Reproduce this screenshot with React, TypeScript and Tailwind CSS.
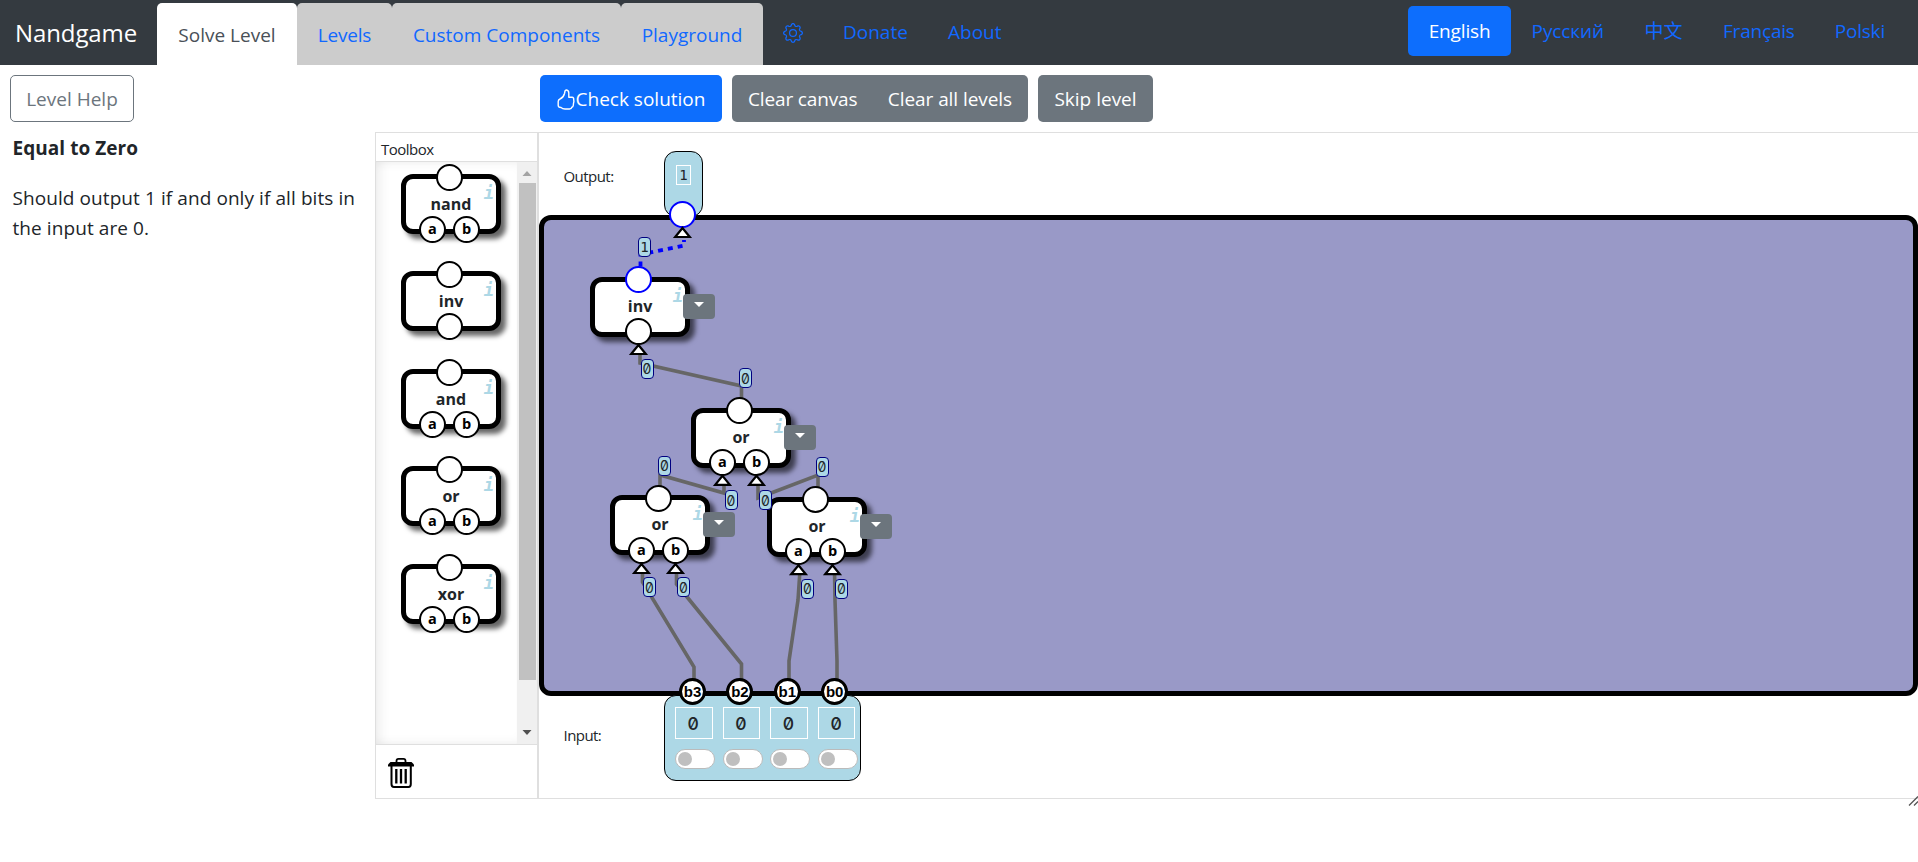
import { BsGear } from "react-icons/bs";

const STAGE_X = 539;
const STAGE_Y = 132;

type Port = { label?: string; dx: number };

const AB: Port[] = [{ label: "a", dx: 31.5 }, { label: "b", dx: 65.5 }];
const INV: Port[] = [{ dx: 48.5 }];

function Connector({ label, live, left, top }: { label?: string; live?: boolean; left: number; top: number }) {
  return (
    <div
      className={`absolute flex size-[27px] items-center justify-center rounded-full border-[2.5px] bg-white text-[14.5px] leading-none font-bold text-black ${live ? "border-[#0000ff]" : "border-black"}`}
      style={{ left: left - 13.5, top: top - 13.5 }}
    >
      {label}
    </div>
  );
}

function Gate({ name, inputs = AB, live, drop = 0, portDrop = drop }: { name: string; inputs?: Port[]; live?: boolean; drop?: number; portDrop?: number }) {
  return (
    <div className="relative h-[60px] w-[100px] shrink-0 rounded-[12px] border-[5px] border-black bg-white shadow-[5px_5px_5px_rgba(0,0,0,0.6)]">
      <div className="text-center text-[16px] leading-[22px] font-bold text-[#212529]" style={{ paddingTop: 13 + drop }}>{name}</div>
      <div className="absolute top-[4px] right-[2px] font-['DejaVu_Sans_Mono',monospace] text-[17px] leading-[21px] font-bold text-[#add8e6] italic">i</div>
      <Connector left={43.5} top={-2.5 + portDrop} live={live} />
      {inputs.map((p) => (
        <Connector key={p.dx} label={p.label} left={p.dx - 5} top={49.5 + portDrop} />
      ))}
    </div>
  );
}

function Caret() {
  return (
    <button className="absolute top-[17px] left-[93px] flex h-[25px] w-[32px] justify-center rounded-[4px] bg-[#6c757d] pt-[8px]">
      <svg width="10" height="5" viewBox="0 0 10 5"><path d="M0 0H10L5 5Z" fill="#fff" /></svg>
    </button>
  );
}

function ThumbUp() {
  return (
    <svg className="mr-px" width="18" height="21" viewBox="0 0 18 21" fill="none" stroke="#fff" strokeWidth="1.4" strokeLinejoin="round" strokeLinecap="round">
      <path d="M1.200 12.500Q1.200 10.800 3 10Q6.500 8.500 7.500 4.500L8 2Q8.300 0.900 9.600 1Q11.800 1.300 11.800 4.200V8.200H15Q17 8.400 16.700 10.500L16.900 12.300L16.500 14.300L16.300 16.300Q16 18 14.800 18.200Q14.500 20 12.500 20H8Q5.500 19.800 4 18.500Q1.200 18.300 1.200 16.500Z" />
    </svg>
  );
}

const nodes = [
  { name: "inv", x: 590, y: 277, inputs: INV, live: true, portDrop: 0 },
  { name: "or", x: 691, y: 408, inputs: AB, portDrop: 0 },
  { name: "or", x: 610, y: 495, inputs: AB, portDrop: 1 },
  { name: "or", x: 767, y: 497, inputs: AB, portDrop: 0 },
];

const wires = [
  "M640 350V363L741.5 386V400",
  "M660 488V475L724 493V483",
  "M818 490V475L758 498V483",
  "M642.5 568V582L694 667V682",
  "M676.5 568V584L741.5 664V682",
  "M800 570L798 600L789 661V682",
  "M834.5 570L835 600L837 661V682",
];

const arrows = [
  [682.5, 226.5], [638.5, 343.5], [722.5, 474.3], [756.5, 474.3],
  [641.5, 562.5], [675.5, 562.5], [798.5, 563.7], [832.5, 563.7],
];

const tags = [
  { v: "1", x: 638, y: 237 }, { v: "0", x: 640.5, y: 358.5 }, { v: "0", x: 739, y: 368 },
  { v: "0", x: 658, y: 455.5 }, { v: "0", x: 724.5, y: 490 }, { v: "0", x: 815.5, y: 456.5 },
  { v: "0", x: 759, y: 490 }, { v: "0", x: 643, y: 577 }, { v: "0", x: 677, y: 577 },
  { v: "0", x: 801, y: 578.5 }, { v: "0", x: 835, y: 578.5 },
];

const bits = ["b3", "b2", "b1", "b0"];

function Tab({ children, className }: { children: string; className: string }) {
  return <a className={`flex h-[62px] items-center justify-center rounded-t-[5px] pt-[3px] ${className}`}>{children}</a>;
}

function Toolbox() {
  return (
    <aside className="flex w-[164px] shrink-0 flex-col border border-r-2 border-[#dfdfdf]">
      <div className="h-[29px] border-b border-[#dfdfdf] pt-[5px] pl-[5px] text-[15px] leading-[22px] tracking-[-0.5px]">Toolbox</div>
      <div className="flex h-[582px]">
        <div className="flex w-[141px] flex-col gap-[37.4px] pt-[12px] pl-[25px] shadow-[inset_10px_0_12px_-6px_rgba(0,0,0,0.07),inset_0_8px_12px_-8px_rgba(0,0,0,0.07),inset_0_-8px_12px_-8px_rgba(0,0,0,0.07)]">
          <Gate name="nand" drop={1} />
          <Gate name="inv" inputs={INV} drop={1} />
          <Gate name="and" drop={1} />
          <Gate name="or" drop={1} />
          <Gate name="xor" drop={1} />
        </div>
        <div className="flex w-[20px] flex-col items-center justify-between bg-[#f0f0f0]">
          <svg width="10" height="21" viewBox="0 0 10 21"><path d="M0.5 14L5 9L9.5 14Z" fill="#a3a3a3" /></svg>
          <div className="mb-auto h-[497px] w-[17px] bg-[#c1c1c1]" />
          <svg width="10" height="21" viewBox="0 0 10 21"><path d="M0.5 7L5 12L9.5 7Z" fill="#505050" /></svg>
        </div>
      </div>
      <div className="grow border-t border-[#dfdfdf] pt-[12px] pl-[12px]">
        <svg width="26" height="32" viewBox="0 0 26 32" fill="none" stroke="#000">
          <path d="M8.5 6V4Q8.500 1.800 10.500 1.800H15.500Q17.500 1.800 17.500 4V6" strokeWidth="1.800" />
          <path d="M0 9.500V7.500L2.500 5H23.500L26 7.500V9.500Z" fill="#000" stroke="none" />
          <path d="M3.500 9V27Q3.500 30 6 30H20.500Q22.800 30 22.800 27V9" strokeWidth="2" />
          <path d="M8.300 12V26.500M13 12V26.500M17.700 12V26.500" strokeWidth="2.3" />
        </svg>
      </div>
    </aside>
  );
}

function Stage() {
  return (
    <main className="relative flex grow flex-col border-t border-b border-[#dfdfdf]">
      <div className="h-[82px] pt-[32px] pl-[24.5px] text-[15px] leading-[22px] tracking-[-0.55px]">Output:</div>
      <div className="h-[481px] rounded-[12px] border-[5px] border-black bg-[#9999c7]" />
      <div className="grow pt-[28px] pl-[24.5px] text-[15px] leading-[22px] tracking-[-0.55px]">Input:</div>

      <div className="absolute top-[18px] left-[125px] flex h-[66px] w-[39px] justify-center rounded-[12px] border border-black bg-[#add8e6] pt-[13px]">
        <div className="flex h-[20px] w-[15px] items-center justify-center border border-white font-['DejaVu_Sans_Mono',monospace] text-[14px]">1</div>
      </div>

      <div className="absolute top-[562px] left-[125px] flex h-[86px] w-[197px] gap-[10px] rounded-[12px] border border-black bg-[#add8e6] pt-[11px] pl-[10px]">
        {bits.map((b) => (
          <div key={b} className="w-[37.6px]">
            <div className="flex h-[32px] w-[37.5px] items-center justify-center border border-white pt-[2px] pr-px font-['Inter',sans-serif] text-[17.5px] font-medium slashed-zero">0</div>
            <div className="mt-[10px] h-[20px] w-[40px] rounded-full border border-[#bbb] bg-white p-[2px]">
              <div className="size-[14px] rounded-full bg-[#bfbfbf]" />
            </div>
          </div>
        ))}
      </div>

      <svg className="absolute -top-px left-0" width="1379" height="667" viewBox="539 132 1379 667" fill="none">
        <g stroke="#666" strokeWidth="3.600">{wires.map((d) => <path key={d} d={d} />)}</g>
        <path d="M684 240V245.500L640.500 254.500V268" stroke="#00f" strokeWidth="3.800" strokeDasharray="5 5" strokeDashoffset="3" />
      </svg>

      {nodes.map((n) => (
        <div key={`${n.x}-${n.y}`} className="absolute" style={{ left: n.x - STAGE_X, top: n.y - STAGE_Y - 1 }}>
          <Gate name={n.name} inputs={n.inputs} live={n.live} portDrop={n.portDrop} />
          <Caret />
        </div>
      ))}

      <Connector left={682.5 - STAGE_X} top={214.5 - STAGE_Y - 1} live />
      {bits.map((b, i) => (
        <div
          key={b}
          className="absolute flex size-[27px] items-center justify-center rounded-full border-[3px] border-black bg-white font-['Liberation_Sans',sans-serif] text-[15px] leading-none font-bold text-black"
          style={{ left: 140 + i * 47.4, top: 545 }}
        >
          {b}
        </div>
      ))}

      <svg className="absolute -top-px left-0" width="1379" height="667" viewBox="539 132 1379 667" fill="none">
        {arrows.map(([x, y]) => (
          <path key={`${x}-${y}`} d={`M${x} ${y + 1.5}L${x - 7.3} ${y + 10.5}H${x + 7.3}Z`} fill="#fff" stroke="#000" strokeWidth="2.200" />
        ))}
      </svg>

      {tags.map((t) => (
        <div
          key={`${t.x}-${t.y}`}
          className={`absolute flex h-[20px] w-[13px] items-center justify-center rounded-[4px] border border-[#000080] bg-[#add8e6] text-[14px] text-[#212529] slashed-zero ${t.v === "1" ? "font-['DejaVu_Sans_Mono',monospace]" : "font-['Inter',sans-serif]"}`}
          style={{ left: t.x - STAGE_X, top: t.y - STAGE_Y - 1 }}
        >
          {t.v}
        </div>
      ))}

      <svg className="absolute right-0 -bottom-[8px]" width="10" height="10" viewBox="0 0 10 10">
        <path d="M1 9.500L10 0.500M6 9.500L10 5.500" stroke="#555" strokeWidth="1.300" />
      </svg>
    </main>
  );
}

export default function App() {
  return (
    <div className="h-[862px] w-[1918px] overflow-hidden bg-white font-['Open_Sans','Noto_Sans','Noto_Sans_CJK_SC',sans-serif] text-[19px] text-[#212529]">
      <nav className="flex h-[65px] items-end bg-[#343a40] text-[#1168ff]">
        <div className="flex h-[65px] w-[157px] items-center pt-px pl-[15px] text-[24px] tracking-[-0.1px] text-white">Nandgame</div>
        <Tab className="w-[140px] bg-white text-[#495057]">Solve Level</Tab>
        <Tab className="w-[95px] bg-[#ccc] tracking-[-0.2px]">Levels</Tab>
        <Tab className="w-[229px] bg-[#ccc]">Custom Components</Tab>
        <Tab className="w-[142px] bg-[#ccc]">Playground</Tab>
        <div className="flex h-[65px] w-[80px] items-center pl-[20px]"><BsGear size={20} /></div>
        <div className="flex h-[65px] w-[105px] items-center">Donate</div>
        <div className="flex h-[65px] items-center">About</div>
        <div className="mr-[33px] mb-[9px] ml-auto flex h-[50px] items-stretch gap-[40.5px] *:flex *:items-center *:pt-px">
          <span className="mr-[-20px] w-[103px] justify-center rounded-[5px] bg-[#0d6efd] tracking-[-0.15px] text-white">English</span>
          <span className="tracking-[-0.1px]">Русский</span>
          <span>中文</span>
          <span className="mr-[-0.5px] tracking-[-0.2px]">Français</span>
          <span className="tracking-[-0.2px]">Polski</span>
        </div>
      </nav>

      <div className="flex h-[67px] pt-[10px] pl-[10px] *:h-[47px] *:rounded-[5px] *:pt-[2px]">
        <button className="w-[124px] border border-[#6c757d] text-[#6c757d]">Level Help</button>
        <button className="ml-[406px] flex w-[182px] items-center justify-center bg-[#0d6efd] text-white"><ThumbUp />Check solution</button>
        <div className="ml-[10px] flex w-[296px] items-center justify-between bg-[#6c757d] px-[16px] text-white"><span className="tracking-[-0.15px]">Clear canvas</span><span className="tracking-[-0.070px]">Clear all levels</span></div>
        <button className="ml-[10px] w-[115px] bg-[#6c757d] text-white">Skip level</button>
      </div>

      <div className="flex h-[667px]">
        <section className="w-[375px] shrink-0 pl-[12.500px] leading-[30px]">
          <h1 className="pt-px font-bold tracking-[0.050px]">Equal to Zero</h1>
          <p className="mt-[20px] tracking-[0.080px]">Should output 1 if and only if all bits in<br />the input are 0.</p>
        </section>
        <Toolbox />
        <Stage />
      </div>
    </div>
  );
}
